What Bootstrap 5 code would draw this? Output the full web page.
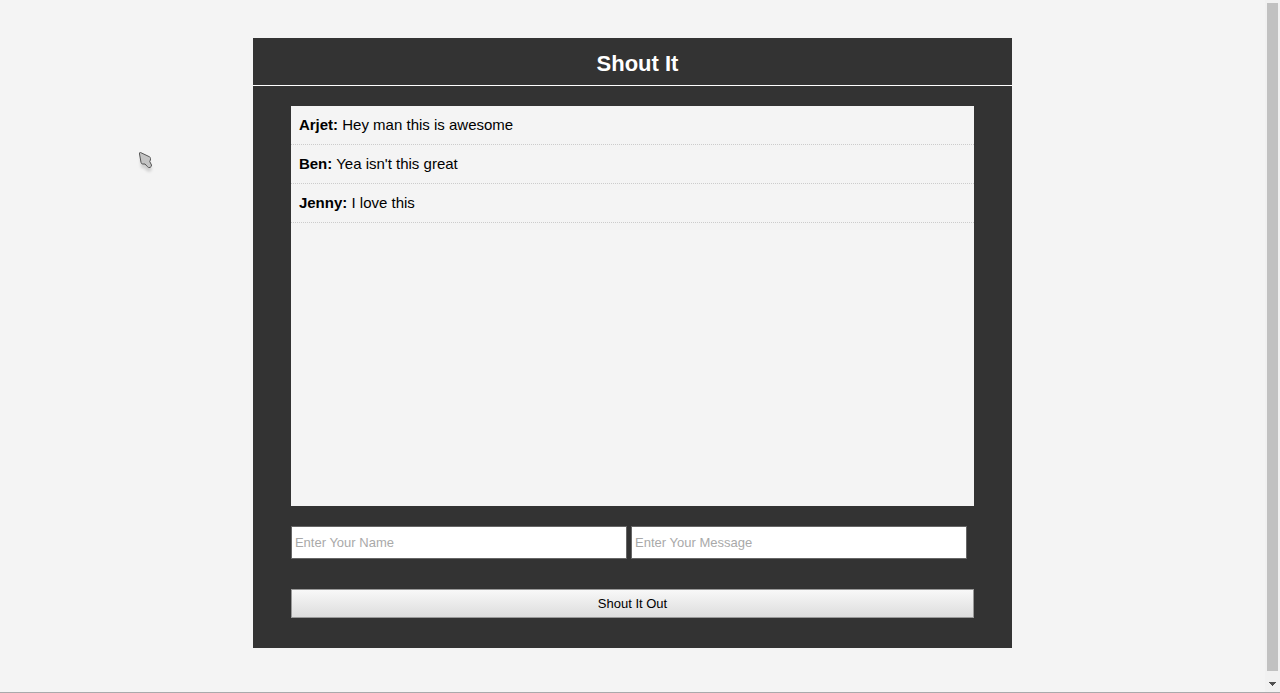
<!DOCTYPE html>
<html lang="en">
<head>
<meta charset="utf-8">
<meta name="viewport" content="width=device-width, initial-scale=1">
<title>Shout It</title>
<link href="https://cdn.jsdelivr.net/npm/bootstrap@5.3.0/dist/css/bootstrap.min.css" rel="stylesheet">
<style>
  body { background: #f4f4f4; color: #000; font-family: "Liberation Sans", Arial, sans-serif; font-size: 15px; line-height: 18px; }
  .window { border-bottom: 1px solid #a9a9ab; }
  .shoutbox { width: 60%; margin: 3% auto; background: #333; }
  .shoutbox-header { border-bottom: 1px solid #fff; padding: 14px 0 9px 10px; }
  .shoutbox-header h1 { font-size: 22px; line-height: 24px; }
  .shoutbox-body { padding: 20px 5% 30px; }
  .shouts { height: 400px; background: #f4f4f4; }
  .shouts li { padding: 10px 8px; border-bottom: 1px dotted #ccc; }
  .fields { gap: 4px; margin: 20px 1% 30px 0; }
  .fields .form-control { height: 33px; padding: 0 3px; border: 1px solid #666; border-radius: 0; font-size: 13px; }
  .fields .form-control::placeholder { color: #a9a9a9; }
  .shout-btn { padding: 6px 0; border: 1px solid #999; border-radius: 0; background: linear-gradient(#f8f8f8, #ddd); color: #000; font-size: 13px; line-height: 15px; }
  .shout-btn:hover { background: linear-gradient(#fff, #e4e4e4); color: #000; }
  .scroll-rail { width: 15px; padding: 3px 2px 6px; background: #f1f1f1; }
  .scroll-thumb { width: 11px; background: #c1c1c1; }
  .scroll-arrow { margin: 11px 2px 0; }
  .pointer { left: 136px; top: 149px; }
</style>
</head>
<body>
<div class="window d-flex vh-100 position-relative">
  <main class="flex-grow-1 overflow-hidden">
    <section class="shoutbox">
      <header class="shoutbox-header text-center text-white">
        <h1 class="fw-bold m-0">Shout It</h1>
      </header>
      <div class="shoutbox-body">
        <ul class="shouts list-unstyled m-0 overflow-auto">
          <li><strong class="fw-bold">Arjet:</strong> Hey man this is awesome</li>
          <li><strong class="fw-bold">Ben:</strong> Yea isn't this great</li>
          <li><strong class="fw-bold">Jenny:</strong> I love this</li>
        </ul>
        <form>
          <div class="fields d-flex">
            <input class="form-control" type="text" name="name" placeholder="Enter Your Name" aria-label="Enter Your Name">
            <input class="form-control" type="text" name="message" placeholder="Enter Your Message" aria-label="Enter Your Message">
          </div>
          <button class="shout-btn btn d-block w-100" type="submit">Shout It Out</button>
        </form>
      </div>
    </section>
  </main>
  <div class="scroll-rail d-flex flex-column flex-shrink-0" aria-hidden="true">
    <div class="scroll-thumb flex-grow-1"></div>
    <svg class="scroll-arrow" width="7" height="4" viewBox="0 0 7 4" shape-rendering="crispEdges"><path d="M0 0h7v1H6v1H5v1H4v1H3V3H2V2H1V1H0z" fill="#505050"/></svg>
  </div>
  <svg class="pointer position-absolute" width="20" height="28" viewBox="0 0 20 28" aria-hidden="true">
    <defs><filter id="soft" x="-50%" y="-50%" width="200%" height="200%"><feGaussianBlur stdDeviation="1.5"/></filter></defs>
    <path d="M4 8l10 4v4l2 4-2 3-3-1-3-3H5z" fill="#000" opacity=".15" filter="url(#soft)"/>
    <path d="M4.500 3.500Q3.200 3.200 3.500 5L5 13.300Q5.300 15 6.800 15H9L11.300 17.500Q12.500 19 14 18.500Q15.800 17.500 15.500 16L13.700 12.500Q14.700 11 14.500 9.500Q14.500 8.300 13.500 7.800Z" fill="#c4c4c4" stroke="#555" stroke-linejoin="round"/>
  </svg>
</div>
<script src="https://cdn.jsdelivr.net/npm/bootstrap@5.3.0/dist/js/bootstrap.bundle.min.js"></script>
</body>
</html>
